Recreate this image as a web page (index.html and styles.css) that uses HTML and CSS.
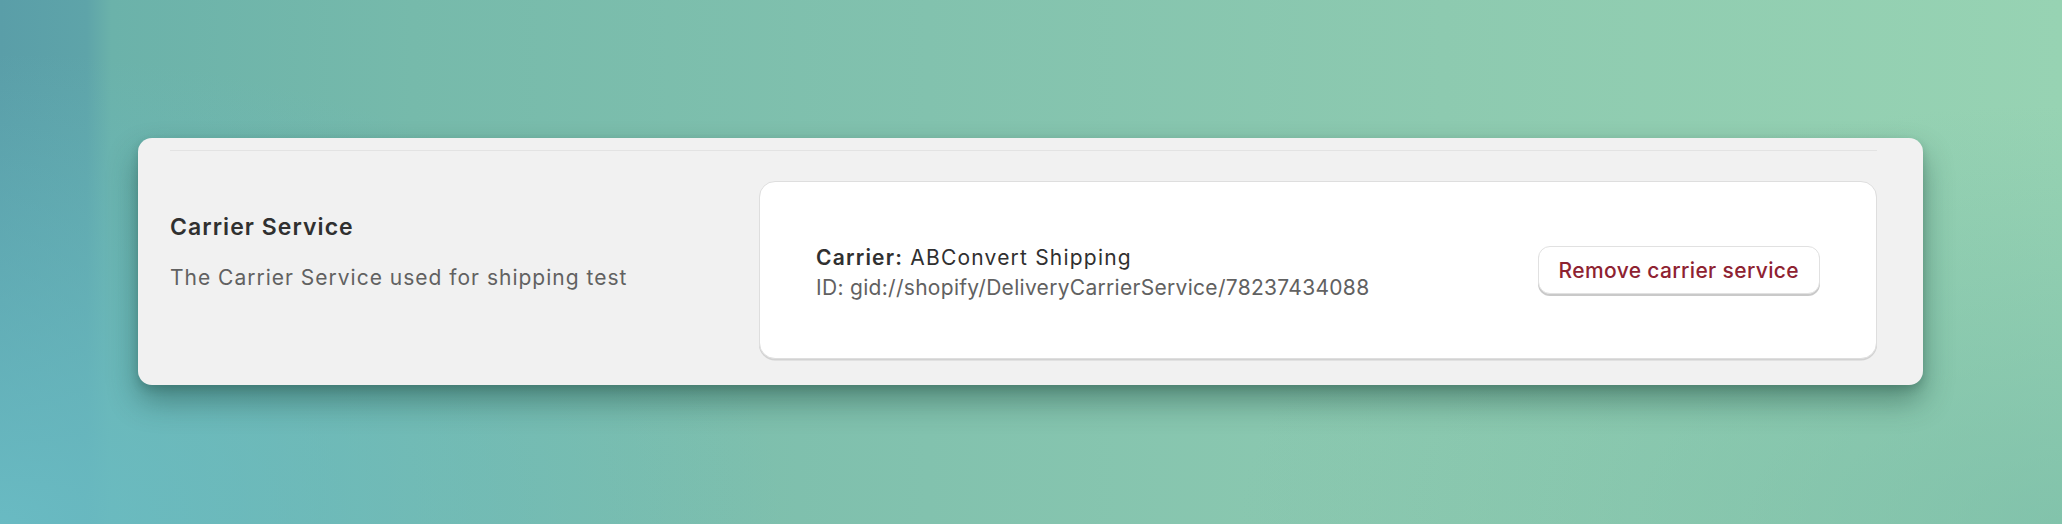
FILE: index.html
```html
<!DOCTYPE html>
<html lang="en">
<head>
<meta charset="utf-8">
<title>Carrier Service</title>
<link rel="stylesheet" href="styles.css">
</head>
<body>
  <section class="panel">
    <div class="divider"></div>
    <div class="row">
      <div class="intro">
        <h2 class="intro-title">Carrier Service</h2>
        <p class="intro-text">The Carrier Service used for shipping test</p>
      </div>
      <div class="card">
        <div class="card-info">
          <div class="carrier-line"><strong class="carrier-label">Carrier:</strong> ABConvert Shipping</div>
          <div class="carrier-id">ID: gid://shopify/DeliveryCarrierService/78237434088</div>
        </div>
        <button class="remove-btn" type="button">Remove carrier service</button>
      </div>
    </div>
  </section>
</body>
</html>
```

FILE: styles.css
```css
html, body {
  margin: 0;
  padding: 0;
}

body {
  width: 2062px;
  height: 524px;
  overflow: hidden;
  box-sizing: border-box;
  padding: 138px 139px 0 138px;
  font-family: Inter, "Noto Sans", "Liberation Sans", sans-serif;
  background:
    radial-gradient(ellipse 38% 90% at 0% 100%, rgba(106, 188, 196, 0.95) 0%, rgba(106, 188, 196, 0) 100%),
    radial-gradient(ellipse 40% 80% at 100% 100%, rgba(116, 184, 166, 0.6) 0%, rgba(116, 184, 166, 0) 100%),
    linear-gradient(90deg, #5a9ea8 0%, #5ea4a9 4.2%, #6bb2aa 5.4%, #76baab 20%, #82c2ae 45%, #8dcab0 70%, #97d3b3 100%);
}

.panel {
  background: #f1f1f1;
  border-radius: 14px;
  padding: 12px 46px 26px 32px;
  box-shadow: 0 16px 30px rgba(20, 60, 50, 0.42), 0 4px 8px rgba(20, 60, 50, 0.2);
}

.divider {
  height: 1px;
  background: #e3e3e3;
  margin-bottom: 30px;
}

.row {
  display: flex;
  align-items: flex-start;
}

.intro {
  width: 589px;
  flex: none;
  padding-top: 30px;
}

.intro-title {
  margin: 0;
  font-size: 23px;
  line-height: 32px;
  font-weight: 600;
  letter-spacing: 1.05px;
  color: #303030;
}

.intro-text {
  margin: 20px 0 0;
  font-size: 21px;
  line-height: 30px;
  letter-spacing: 1px;
  color: #616161;
}

.card {
  flex: 1;
  height: 178px;
  box-sizing: border-box;
  background: #ffffff;
  border: 1px solid #dedede;
  border-radius: 16px;
  box-shadow: 0 1.5px 0 #d2d2d2;
  padding: 0 56px 0 56px;
  display: flex;
  align-items: center;
  justify-content: space-between;
}

.card-info {
  margin-top: 6px;
}

.carrier-line {
  font-size: 21px;
  line-height: 30px;
  letter-spacing: 1.2px;
  color: #303030;
}

.carrier-label {
  font-weight: 600;
}

.carrier-id {
  font-size: 21px;
  line-height: 30px;
  letter-spacing: 0.3px;
  color: #616161;
}

.remove-btn {
  height: 48px;
  box-sizing: border-box;
  padding: 0 20px;
  background: #ffffff;
  border: 1px solid #e1e1e1;
  border-radius: 12px;
  box-shadow: 0 2px 0 #c9c9c9;
  font-family: inherit;
  font-size: 21px;
  font-weight: 500;
  letter-spacing: 0.36px;
  color: #8e2231;
  cursor: pointer;
}
```
